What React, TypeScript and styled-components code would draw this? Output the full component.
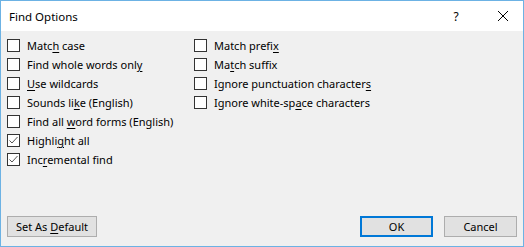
import React from "react";
import styled, { createGlobalStyle } from "styled-components";

const Global = createGlobalStyle`
  html, body { margin: 0; padding: 0; background: #ffffff; }
  body { font-family: "Noto Sans", "Open Sans", sans-serif; }
`;

const Window = styled.div`
  width: 524px;
  height: 247px;
  box-sizing: border-box;
  border: 1px solid #6cb2e4;
  display: flex;
  flex-direction: column;
  background: #f0f0f0;
  color: #000;
  font-size: 11px;
`;

const TitleBar = styled.div`
  height: 30px;
  background: #fff;
  display: flex;
  align-items: center;
  padding-left: 8px;
  padding-right: 1px;
`;

const Title = styled.div`
  flex: 1;
  font-size: 11.5px;
`;

const TitleButton = styled.div<{ $w: number }>`
  width: ${(p) => p.$w}px;
  height: 30px;
  display: flex;
  align-items: center;
  justify-content: center;
  font-size: 12px;
`;

const Body = styled.div`
  flex: 1;
  display: flex;
  flex-direction: column;
  padding: 5px 6px 9px 6px;
`;

const Columns = styled.div`
  display: flex;
  flex: 1;
`;

const Column = styled.div<{ $w?: number }>`
  display: flex;
  flex-direction: column;
  width: ${(p) => (p.$w ? `${p.$w}px` : "auto")};
`;

const Row = styled.label`
  display: flex;
  align-items: center;
  height: 19px;
  white-space: nowrap;
`;

const Box = styled.span`
  width: 11px;
  height: 11px;
  border: 1px solid #333;
  background: #fff;
  margin-right: 7px;
  flex-shrink: 0;
  display: flex;
  align-items: center;
  justify-content: center;
`;

const Footer = styled.div`
  display: flex;
  align-items: center;
  gap: 11px;
`;

const Button = styled.div<{ $primary?: boolean; $w: number }>`
  width: ${(p) => p.$w}px;
  height: 21px;
  box-sizing: border-box;
  background: #e1e1e1;
  border: ${(p) => (p.$primary ? "2px solid #0078d7" : "1px solid #adadad")};
  display: flex;
  align-items: center;
  justify-content: center;
  white-space: pre;
`;

const Spacer = styled.div`
  flex: 1;
`;

const Key = styled.span`
  text-decoration: underline;
  text-underline-offset: 2px;
`;

const Check = () => (
  <svg width="11" height="11" viewBox="0 0 11 11">
    <path d="M1.5 5.5 L4 8 L9.5 2" fill="none" stroke="#555" strokeWidth="1" />
  </svg>
);

type Item = { pre: string; key: string; post: string; checked?: boolean };

const left: Item[] = [
  { pre: "Matc", key: "h", post: " case" },
  { pre: "Find whole words onl", key: "y", post: "" },
  { pre: "", key: "U", post: "se wildcards" },
  { pre: "Sounds li", key: "k", post: "e (English)" },
  { pre: "Find all ", key: "w", post: "ord forms (English)" },
  { pre: "Highli", key: "g", post: "ht all", checked: true },
  { pre: "Inc", key: "r", post: "emental find", checked: true },
];

const right: Item[] = [
  { pre: "Match prefi", key: "x", post: "" },
  { pre: "Ma", key: "t", post: "ch suffix" },
  { pre: "Ignore punctuation character", key: "s", post: "" },
  { pre: "Ignore white-sp", key: "a", post: "ce characters" },
];

const Option = ({ item }: { item: Item }) => (
  <Row>
    <Box>{item.checked && <Check />}</Box>
    <span>
      {item.pre}
      <Key>{item.key}</Key>
      {item.post}
    </span>
  </Row>
);

export default function App() {
  return (
    <Window>
      <Global />
      <TitleBar>
        <Title>Find Options</Title>
        <TitleButton $w={56}>?</TitleButton>
        <TitleButton $w={38}>
          <svg width="10" height="10" viewBox="0 0 10 10">
            <path d="M0 0 L10 10 M10 0 L0 10" stroke="#000" strokeWidth="1" />
          </svg>
        </TitleButton>
      </TitleBar>
      <Body>
        <Columns>
          <Column $w={187}>
            {left.map((it, i) => (
              <Option key={i} item={it} />
            ))}
          </Column>
          <Column>
            {right.map((it, i) => (
              <Option key={i} item={it} />
            ))}
          </Column>
        </Columns>
        <Footer>
          <Button $w={90}>
            <span>
              Set As <Key>D</Key>efault
            </span>
          </Button>
          <Spacer />
          <Button $w={73} $primary>
            OK
          </Button>
          <Button $w={73}>Cancel</Button>
        </Footer>
      </Body>
    </Window>
  );
}
